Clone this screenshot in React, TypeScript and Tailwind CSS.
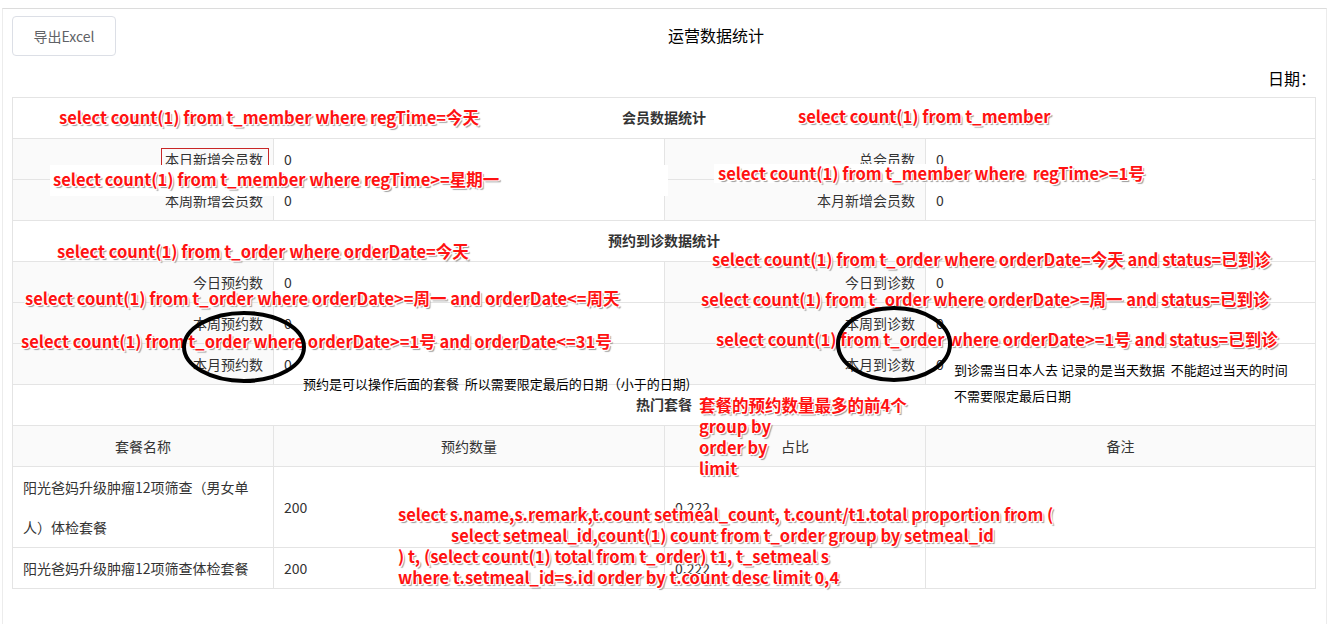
import type { ReactNode } from "react"

const red =
  "absolute whitespace-pre font-bold text-[16.5px] leading-5 text-[#ff1212] [text-shadow:1px_1px_0_#fff,-1px_-1px_0_#fff,1px_-1px_0_#fff,-1px_1px_0_#fff,2px_2px_1px_#9a9a9a]"
const black = "absolute whitespace-pre text-[13px] leading-[18px] text-black"

function Label({ children }: { children: ReactNode }) {
  return (
    <div className="flex items-center justify-end border-r border-[#e4e4e4] bg-[#fafafa] pr-[10px]">
      {children}
    </div>
  )
}

function Value({ children, last }: { children: ReactNode; last?: boolean }) {
  return (
    <div className={last ? "flex items-center pl-[10px]" : "flex items-center border-r border-[#e4e4e4] pl-[10px]"}>
      {children}
    </div>
  )
}

function StatRow({ a, b, c, d }: { a: string; b: string; c: string; d: string }) {
  return (
    <div className="grid h-[41px] grid-cols-[261px_391px_261px_1fr] border-b border-[#e4e4e4]">
      <Label>{a}</Label>
      <Value>{b}</Value>
      <Label>{c}</Label>
      <Value last>{d}</Value>
    </div>
  )
}

function TitleRow({ children }: { children: ReactNode }) {
  return (
    <div className="flex h-[41px] items-center justify-center border-b border-[#e4e4e4] pb-[2px] font-bold">
      {children}
    </div>
  )
}

export default function App() {
  return (
    <div className="relative h-[624px] w-[1329px] overflow-hidden bg-white font-['Noto_Sans_CJK_SC',sans-serif] text-[14px] text-[#333]">
      <div className="mx-[2px] mt-2 h-[616px] border-x border-t border-x-[#ececec] border-t-[#dcdcdc] pl-[9px] pr-[10px] pt-[7px]">
        {/* header */}
        <div className="flex h-10 items-center">
          <button className="h-10 w-[104px] rounded border border-[#dcdfe6] bg-white text-[14px] text-[#606266]">
            导出Excel
          </button>
          <div className="flex-1 pb-[2px] text-center text-[16px] text-black">运营数据统计</div>
        </div>
        <div className="mt-[10px] h-6 text-right text-[16px] leading-6 text-black">日期：</div>

        {/* report table */}
        <div className="mt-[7px] border border-[#e4e4e4]">
          <TitleRow>会员数据统计</TitleRow>
          <StatRow a="本日新增会员数" b="0" c="总会员数" d="0" />
          <StatRow a="本周新增会员数" b="0" c="本月新增会员数" d="0" />
          <TitleRow>预约到诊数据统计</TitleRow>
          <StatRow a="今日预约数" b="0" c="今日到诊数" d="0" />
          <StatRow a="本周预约数" b="0" c="本周到诊数" d="0" />
          <StatRow a="本月预约数" b="0" c="本月到诊数" d="0" />
          <TitleRow>热门套餐</TitleRow>
          <div className="grid h-[41px] grid-cols-[261px_391px_261px_1fr] border-b border-[#e4e4e4] bg-[#fafafa] text-center">
            <div className="flex items-center justify-center border-r border-[#e4e4e4]">套餐名称</div>
            <div className="flex items-center justify-center border-r border-[#e4e4e4]">预约数量</div>
            <div className="flex items-center justify-center border-r border-[#e4e4e4]">占比</div>
            <div className="flex items-center justify-center">备注</div>
          </div>
          <div className="grid h-[81px] grid-cols-[261px_391px_261px_1fr] border-b border-[#e4e4e4]">
            <div className="flex items-center border-r border-[#e4e4e4] pl-[10px] pr-[14px] leading-10">
              阳光爸妈升级肿瘤12项筛查（男女单人）体检套餐
            </div>
            <Value>200</Value>
            <Value>0.222</Value>
            <Value last>{""}</Value>
          </div>
          <div className="grid h-10 grid-cols-[261px_391px_261px_1fr]">
            <div className="flex items-center border-r border-[#e4e4e4] pl-[10px]">阳光爸妈升级肿瘤12项筛查体检套餐</div>
            <Value>200</Value>
            <Value>0.222</Value>
            <Value last>{""}</Value>
          </div>
        </div>
      </div>

      {/* annotations drawn over the screenshot */}
      <div className="absolute left-[161px] top-[148px] h-[21px] w-[108px] border border-[#c82626]" />

      <div className={`${red} left-[59px] top-[107px]`}>select count(1) from t_member where regTime=今天</div>
      <div className={`${red} left-[798px] top-[106px]`}>select count(1) from t_member</div>
      <div className="absolute left-[50px] top-[165px] h-[31px] w-[618px] bg-white" />
      <div className={`${red} left-[53px] top-[169px]`}>select count(1) from t_member where regTime&gt;=星期一</div>
      <div className="absolute left-[714px] top-[164px] h-[19px] w-[598px] bg-white" />
      <div className={`${red} left-[718px] top-[163px]`}>select count(1) from t_member where  regTime&gt;=1号</div>

      <div className={`${red} left-[57px] top-[241px]`}>select count(1) from t_order where orderDate=今天</div>
      <div className={`${red} left-[712px] top-[249px]`}>select count(1) from t_order where orderDate=今天 and status=已到诊</div>
      <div className={`${red} left-[25px] top-[288px]`}>select count(1) from t_order where orderDate&gt;=周一 and orderDate&lt;=周天</div>
      <div className={`${red} left-[701px] top-[289px]`}>select count(1) from t_order where orderDate&gt;=周一 and status=已到诊</div>
      <div className={`${red} left-[21px] top-[331px]`}>select count(1) from t_order where orderDate&gt;=1号 and orderDate&lt;=31号</div>
      <div className={`${red} left-[716px] top-[329px]`}>select count(1) from t_order where orderDate&gt;=1号 and status=已到诊</div>

      <div className={`${black} left-[303px] top-[375px]`}>预约是可以操作后面的套餐  所以需要限定最后的日期（小于的日期)</div>
      <div className={`${black} left-[954px] top-[361px]`}>到诊需当日本人去 记录的是当天数据  不能超过当天的时间</div>
      <div className={`${black} left-[954px] top-[387px]`}>不需要限定最后日期</div>

      <div className={`${red} left-[699px] top-[395px] leading-[21px]`}>
        {"套餐的预约数量最多的前4个\ngroup by\norder by\nlimit"}
      </div>

      <div className={`${red} left-[398px] top-[504px]`}>select s.name,s.remark,t.count setmeal_count, t.count/t1.total proportion from (</div>
      <div className={`${red} left-[451px] top-[525px]`}>select setmeal_id,count(1) count from t_order group by setmeal_id</div>
      <div className={`${red} left-[398px] top-[546px]`}>) t, (select count(1) total from t_order) t1, t_setmeal s</div>
      <div className={`${red} left-[398px] top-[567px]`}>where t.setmeal_id=s.id order by t.count desc limit 0,4</div>

      <svg className="pointer-events-none absolute left-0 top-0" width="1329" height="624">
        <ellipse cx="244" cy="347" rx="60" ry="34" fill="none" stroke="#000" strokeWidth="4" />
        <ellipse cx="894" cy="344" rx="56" ry="36" fill="none" stroke="#000" strokeWidth="4" />
      </svg>
    </div>
  )
}
